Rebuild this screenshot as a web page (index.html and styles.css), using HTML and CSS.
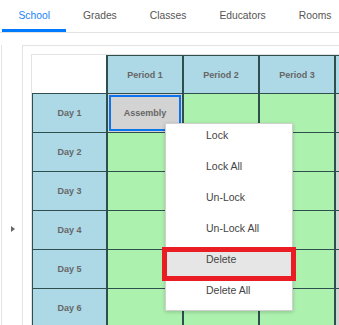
FILE: index.html
```html
<!DOCTYPE html>
<html lang="en">
<head>
    <meta charset="UTF-8">
    <meta name="viewport" content="width=device-width, initial-scale=1.0">
    <title>Timetable</title>
    <link rel="stylesheet" href="styles.css">
</head>
<body>
    <div class="tabs">
        <a class="tab active">School</a>
        <a class="tab">Grades</a>
        <a class="tab">Classes</a>
        <a class="tab">Educators</a>
        <a class="tab">Rooms</a>
    </div>

    <div class="main">
        <div class="sidebar">
            <span class="toggle"></span>
        </div>

        <div class="panel">
            <div class="grid-wrap">
                <table class="timetable">
                    <colgroup>
                        <col class="day-col">
                        <col class="period-col">
                        <col class="period-col">
                        <col class="period-col">
                        <col class="period-col">
                    </colgroup>
                    <tr class="head-row">
                        <th class="corner"></th>
                        <th class="period">Period 1</th>
                        <th class="period">Period 2</th>
                        <th class="period">Period 3</th>
                        <th class="period"></th>
                    </tr>
                    <tr>
                        <td class="day">Day 1</td>
                        <td class="slot busy selected">Assembly</td>
                        <td class="slot"></td>
                        <td class="slot"></td>
                        <td class="slot busy"></td>
                    </tr>
                    <tr>
                        <td class="day">Day 2</td>
                        <td class="slot"></td>
                        <td class="slot"></td>
                        <td class="slot"></td>
                        <td class="slot busy"></td>
                    </tr>
                    <tr>
                        <td class="day">Day 3</td>
                        <td class="slot"></td>
                        <td class="slot"></td>
                        <td class="slot"></td>
                        <td class="slot busy"></td>
                    </tr>
                    <tr>
                        <td class="day">Day 4</td>
                        <td class="slot"></td>
                        <td class="slot"></td>
                        <td class="slot"></td>
                        <td class="slot busy"></td>
                    </tr>
                    <tr>
                        <td class="day">Day 5</td>
                        <td class="slot"></td>
                        <td class="slot"></td>
                        <td class="slot"></td>
                        <td class="slot busy"></td>
                    </tr>
                    <tr>
                        <td class="day">Day 6</td>
                        <td class="slot"></td>
                        <td class="slot"></td>
                        <td class="slot"></td>
                        <td class="slot busy"></td>
                    </tr>
                </table>

                <ul class="context-menu">
                    <li>Lock</li>
                    <li>Lock All</li>
                    <li>Un-Lock</li>
                    <li>Un-Lock All</li>
                    <li class="hover">Delete<span class="callout"></span></li>
                    <li>Delete All</li>
                </ul>
            </div>
        </div>
    </div>
</body>
</html>
```

FILE: styles.css
```css
body {
    margin: 0;
    font-family: "Liberation Sans", Arial, sans-serif;
    background: #fff;
    width: 339px;
    height: 325px;
    overflow: hidden;
}

.tabs {
    display: flex;
    height: 32px;
    padding-left: 2px;
    border-bottom: 1px solid #e3e3e3;
}

.tab {
    box-sizing: border-box;
    height: 32px;
    padding: 10px 16.5px 0;
    font-size: 10.3px;
    color: #555;
    border-bottom: 3px solid transparent;
    white-space: nowrap;
}

.tab.active {
    color: #1a82f7;
    border-bottom-color: #007bff;
}

.main {
    display: flex;
    margin-top: 12px;
}

.sidebar {
    width: 21px;
    margin-left: 1px;
    border-left: 1px solid #e3e3e3;
    padding-top: 181px;
    padding-left: 9px;
    box-sizing: border-box;
    flex-shrink: 0;
}

.toggle {
    display: block;
    width: 0;
    height: 0;
    border-left: 4px solid #666;
    border-top: 3.5px solid transparent;
    border-bottom: 3.5px solid transparent;
}

.panel {
    flex: 1;
    border-left: 1px solid #e3e3e3;
    border-top: 1px solid #e3e3e3;
    padding: 8px 0 0 8px;
    height: 400px;
    overflow: hidden;
}

.grid-wrap {
    position: relative;
    border-left: 1px solid #e3e3e3;
    border-top: 1px solid #e3e3e3;
    width: 400px;
}

.timetable {
    border-collapse: separate;
    border-spacing: 0;
    table-layout: fixed;
    width: 380px;
    font-size: 9px;
    font-weight: bold;
    color: #666;
}

.day-col {
    width: 76px;
}

.period-col {
    width: 76px;
}

.timetable th,
.timetable td {
    padding: 0;
    text-align: center;
    border-right: 2px solid #2f4f4f;
    border-bottom: 1px solid #2f4f4f;
}

.head-row {
    height: 40px;
}

.timetable tr {
    height: 39px;
}

.corner {
    background: #fff;
}

.period {
    background: #add8e6;
    border-top: 1px solid #2f4f4f;
}

.day {
    background: #add8e6;
    border-left: 1px solid #2f4f4f;
}

.slot {
    background: #acf2ae;
}

.slot.busy {
    background: #d3d3d3;
}

.slot.selected {
    box-shadow: inset 0 0 0 1px #d3d3d3, inset 0 0 0 3px #0a74ec;
}

.context-menu {
    position: absolute;
    left: 133px;
    top: 68px;
    width: 126px;
    margin: 0;
    padding: 0;
    list-style: none;
    background: #fff;
    border: 1px solid #d0d0d0;
    box-shadow: 0 1px 4px rgba(0, 0, 0, 0.2);
    font-size: 10.5px;
    color: #444;
}

.context-menu li {
    position: relative;
    height: 31px;
    line-height: 23px;
    padding-left: 40px;
    box-sizing: border-box;
}

.context-menu li.hover {
    background: #e6e6e6;
}

.callout {
    position: absolute;
    left: -4px;
    right: -4px;
    top: -1px;
    bottom: -2px;
    border: 5px solid #ea1c24;
}
```
